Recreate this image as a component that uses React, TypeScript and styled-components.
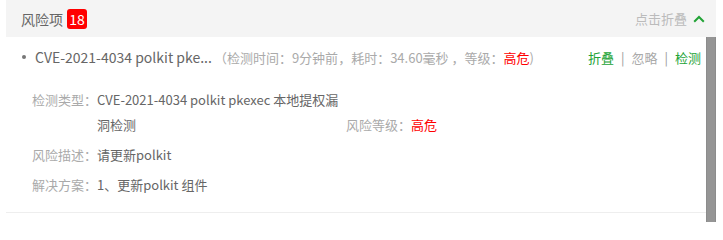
import React from 'react';
import styled, { createGlobalStyle } from 'styled-components';

type Risk = {
  id: number;
  title: string;
  time: string;
  cost: string;
  level: string;
  open?: boolean;
  type?: string;
  desc?: string;
  solution?: string;
};

const risks: Risk[] = [
  {
    id: 1,
    title: 'CVE-2021-4034 polkit pke...',
    time: '9分钟前',
    cost: '34.60毫秒',
    level: '高危',
    open: true,
    type: 'CVE-2021-4034 polkit pkexec 本地提权漏洞检测',
    desc: '请更新polkit',
    solution: '1、更新polkit 组件',
  },
];

const GlobalStyle = createGlobalStyle`
  html, body {
    margin: 0;
    padding: 0;
    overflow: hidden;
    background: #fff;
  }
  body {
    font-family: "Noto Sans CJK SC", "Noto Sans", sans-serif;
  }
`;

const Panel = styled.div`
  height: 228px;
  padding: 0 7px 0 6px;
  box-sizing: border-box;
  overflow: hidden;
`;

const Header = styled.div`
  height: 37px;
  background: #f4f4f4;
  display: flex;
  align-items: center;
  justify-content: space-between;
  padding: 0 11px 0 15px;
`;

const HeaderTitle = styled.div`
  display: flex;
  align-items: center;
  font-size: 14px;
  color: #666;
`;

const Badge = styled.span`
  margin-left: 4px;
  min-width: 20px;
  height: 20px;
  padding: 0 1px;
  box-sizing: border-box;
  border-radius: 3px;
  background: #f00;
  color: #fff;
  font-size: 14px;
  line-height: 20px;
  text-align: center;
`;

const Fold = styled.div`
  display: flex;
  align-items: center;
  gap: 6px;
  font-size: 13px;
  color: #bbb;
  cursor: pointer;
`;

// list body with a drawn scrollbar next to it (the native one is hidden)
const Body = styled.div`
  display: flex;
  height: 191px;
`;

const List = styled.div`
  flex: 1;
  min-width: 0;
  overflow: hidden;
`;

const ScrollTrack = styled.div`
  width: 10px;
  flex: none;
`;

const ScrollThumb = styled.div`
  height: 185px;
  background: #959595;
  box-shadow: inset 1px 0 0 #8c8c8c, inset -1px 0 0 #8c8c8c;
`;

const Item = styled.div`
  border-bottom: 1px solid #eee;
`;

const ItemHead = styled.div`
  height: 40px;
  display: flex;
  align-items: center;
  padding: 0 5px 0 16px;
  white-space: nowrap;
`;

const Bullet = styled.span`
  width: 4px;
  height: 4px;
  border-radius: 50%;
  background: #777;
  margin-right: 9px;
  flex: none;
`;

const Title = styled.span`
  font-size: 14px;
  color: #666;
`;

const Meta = styled.span`
  margin-left: 2px;
  font-size: 13px;
  color: #aaa;
`;

const Danger = styled.span`
  color: #f00;
`;

const Actions = styled.div`
  margin-left: auto;
  display: flex;
  align-items: center;
  font-size: 13px;
`;

const Action = styled.span<{ muted?: boolean }>`
  color: ${({ muted }) => (muted ? '#aaa' : '#22a336')};
  cursor: pointer;
`;

const Sep = styled.span`
  margin: 0 7px;
  color: #999;
`;

const Details = styled.div`
  padding: 10px 0 15px 26px;
  font-size: 13px;
  line-height: 25px;
`;

const Row = styled.div`
  display: flex;
  align-items: last baseline;

  & + & {
    margin-top: 5px;
  }
`;

const Field = styled.div<{ width?: number }>`
  display: flex;
  width: ${({ width }) => (width ? width + 'px' : 'auto')};
  flex: none;
`;

const Label = styled.span`
  flex: none;
  color: #aaa;
`;

const Value = styled.span`
  flex: 1;
  color: #666;
`;

const ChevronUp = () => (
  <svg width="12" height="8" viewBox="0 0 12 8" fill="none">
    <path d="M1.2 6.8 6 2l4.8 4.8" stroke="#22a336" strokeWidth="2" />
  </svg>
);

const RiskItem: React.FC<{ risk: Risk }> = ({ risk }) => (
  <Item>
    <ItemHead>
      <Bullet />
      <Title>{risk.title}</Title>
      <Meta>
        （检测时间：{risk.time}，耗时：{risk.cost} ，等级：<Danger>{risk.level}</Danger>)
      </Meta>
      <Actions>
        <Action>{risk.open ? '折叠' : '展开'}</Action>
        <Sep>|</Sep>
        <Action muted>忽略</Action>
        <Sep>|</Sep>
        <Action>检测</Action>
      </Actions>
    </ItemHead>
    {risk.open && (
      <Details>
        <Row>
          <Field width={314}>
            <Label>检测类型：</Label>
            <Value>{risk.type}</Value>
          </Field>
          <Field>
            <Label>风险等级：</Label>
            <Danger>{risk.level}</Danger>
          </Field>
        </Row>
        <Row>
          <Field>
            <Label>风险描述：</Label>
            <Value>{risk.desc}</Value>
          </Field>
        </Row>
        <Row>
          <Field>
            <Label>解决方案：</Label>
            <Value>{risk.solution}</Value>
          </Field>
        </Row>
      </Details>
    )}
  </Item>
);

const App: React.FC = () => (
  <>
    <GlobalStyle />
    <Panel>
      <Header>
        <HeaderTitle>
          风险项<Badge>18</Badge>
        </HeaderTitle>
        <Fold>
          点击折叠
          <ChevronUp />
        </Fold>
      </Header>
      <Body>
        <List>
          {risks.map((r) => (
            <RiskItem key={r.id} risk={r} />
          ))}
        </List>
        <ScrollTrack>
          <ScrollThumb />
        </ScrollTrack>
      </Body>
    </Panel>
  </>
);

export default App;
